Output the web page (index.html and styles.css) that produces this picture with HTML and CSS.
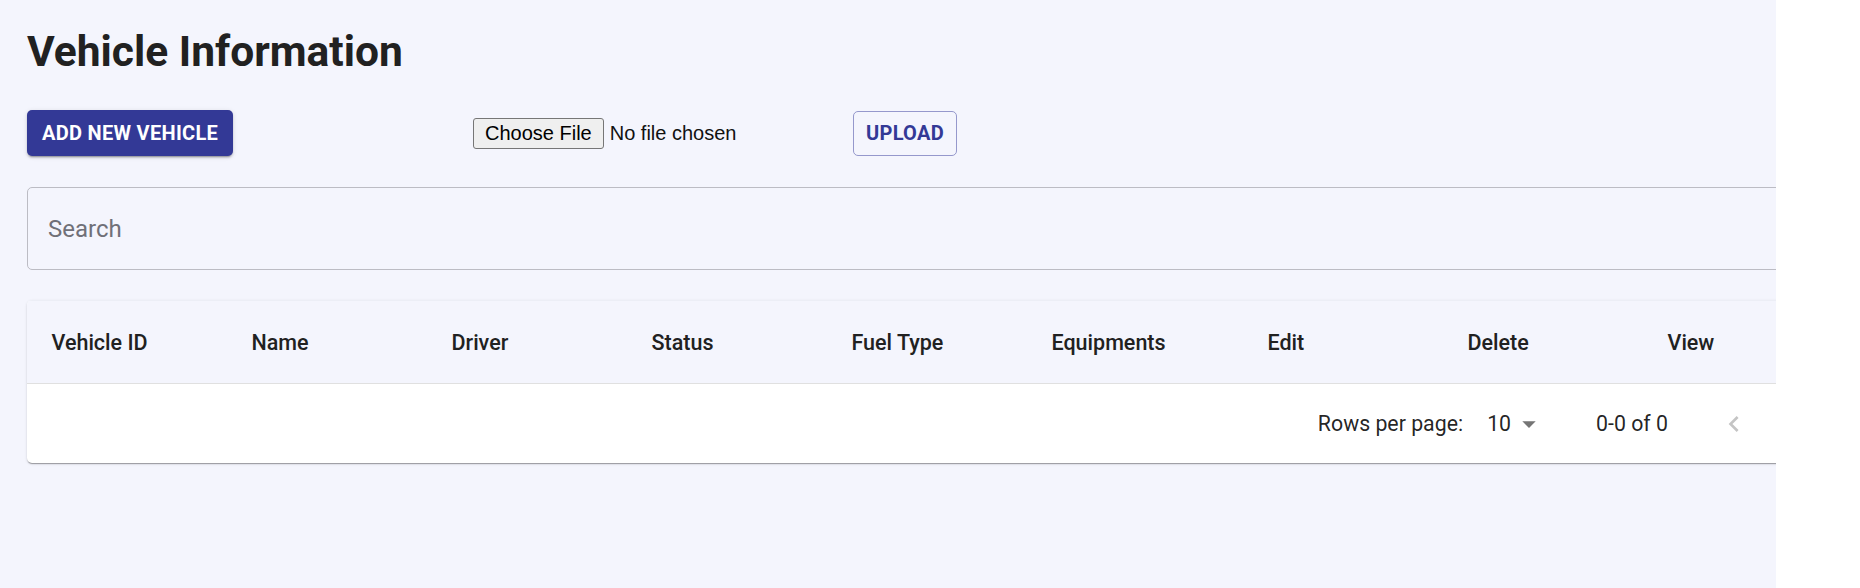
FILE: index.html
```html
<!DOCTYPE html>
<html lang="en">
<head>
<meta charset="utf-8">
<title>Vehicle Information</title>
<link rel="stylesheet" href="styles.css">
</head>
<body>
<div class="page">
  <div class="content">
    <h1 class="title">Vehicle Information</h1>
    <div class="toolbar">
      <button class="btn-primary" type="button">ADD NEW VEHICLE</button>
      <input class="file-input" type="file">
      <button class="btn-outline" type="button">UPLOAD</button>
    </div>
    <div class="search">
      <input class="search-input" type="text" placeholder="Search">
    </div>
    <div class="card">
      <div class="thead">
        <div class="th">Vehicle ID</div>
        <div class="th">Name</div>
        <div class="th">Driver</div>
        <div class="th">Status</div>
        <div class="th">Fuel Type</div>
        <div class="th">Equipments</div>
        <div class="th">Edit</div>
        <div class="th">Delete</div>
        <div class="th">View</div>
      </div>
      <div class="tfoot">
        <span class="rows-label">Rows per page:</span>
        <div class="select">
          <span class="select-value">10</span>
          <svg class="select-icon" viewBox="0 0 24 24" width="32" height="32"><path d="M7 10l5 5 5-5z"/></svg>
        </div>
        <span class="range">0-0 of 0</span>
        <div class="pager">
          <span class="pager-btn"><svg viewBox="0 0 24 24" width="32" height="32"><path d="M15.41 16.59 10.83 12l4.58-4.59L14 6l-6 6 6 6 1.41-1.41z"/></svg></span>
          <span class="pager-btn"><svg viewBox="0 0 24 24" width="32" height="32"><path d="M8.59 16.59 13.17 12 8.59 7.41 10 6l6 6-6 6-1.41-1.41z"/></svg></span>
        </div>
      </div>
    </div>
  </div>
</div>
</body>
</html>
```
FILE: styles.css
```css
html, body {
  margin: 0;
  padding: 0;
  background: #ffffff;
}

.page {
  width: 1776px;
  height: 588px;
  overflow: hidden;
  background: #f4f5fd;
  font-family: Roboto, "Noto Sans", sans-serif;
  color: rgba(0, 0, 0, 0.87);
}

.content {
  width: 1790px;
  padding: 25px 0 0 27px;
}

.title {
  margin: 0;
  font-size: 42.5px;
  line-height: 54px;
  font-weight: 700;
  color: #212121;
}

.toolbar {
  display: flex;
  align-items: center;
  height: 46px;
  margin-top: 31px;
}

.btn-primary {
  height: 46px;
  width: 206px;
  padding: 0;
  border: 0;
  border-radius: 5px;
  background: #333996;
  color: #ffffff;
  font-family: Roboto, sans-serif;
  font-size: 20px;
  font-weight: 700;
  letter-spacing: 0.3px;
  box-shadow: 0 3px 1px -2px rgba(0,0,0,0.2), 0 2px 2px 0 rgba(0,0,0,0.14), 0 1px 5px 0 rgba(0,0,0,0.12);
}

.file-input {
  margin-left: 240px;
  width: 340px;
  font-family: "Liberation Sans", Arial, sans-serif;
  font-size: 20px;
  color: #111;
}

.file-input::file-selector-button {
  font-family: "Liberation Sans", Arial, sans-serif;
  font-size: 20px;
  height: 31px;
  padding: 0 11px;
  margin-right: 6px;
  border: 1px solid #767676;
  border-radius: 3px;
  background: #efefef;
  color: #000;
}

.btn-outline {
  margin-left: 40px;
  height: 45px;
  width: 104px;
  padding: 0;
  border: 1px solid #9598cc;
  border-radius: 5px;
  background: transparent;
  color: #333996;
  font-family: Roboto, sans-serif;
  font-size: 20px;
  font-weight: 700;
  letter-spacing: 0.3px;
}

.search {
  margin-top: 31px;
  height: 83px;
  border: 1px solid #bcbcc4;
  border-radius: 5px;
  box-sizing: border-box;
  display: flex;
  align-items: center;
  padding-left: 20px;
}

.search-input {
  border: 0;
  outline: 0;
  background: transparent;
  font-family: Roboto, sans-serif;
  font-size: 24px;
  color: #333;
  width: 100%;
  padding: 0;
}

.search-input::placeholder {
  color: #707078;
}

.card {
  margin-top: 30px;
  background: #ffffff;
  border-radius: 5px;
  overflow: hidden;
  box-shadow: 0 2px 1px -1px rgba(0,0,0,0.2), 0 1px 1px 0 rgba(0,0,0,0.14), 0 1px 3px 0 rgba(0,0,0,0.12);
}

.thead {
  display: grid;
  grid-template-columns: 200px 200px 200px 200px 200px 216px 200px 200px 200px;
  height: 84px;
  box-sizing: border-box;
  background: #f4f5fd;
  border-top: 1px solid #eceef6;
  border-bottom: 1px solid #e0e0e0;
  align-items: center;
}

.th {
  padding-left: 24.5px;
  font-size: 21.5px;
  font-weight: 500;
  color: #212121;
  white-space: nowrap;
}

.tfoot {
  height: 79px;
  display: flex;
  align-items: center;
  justify-content: flex-end;
  padding-right: 4px;
  font-size: 21.3px;
  color: rgba(0, 0, 0, 0.87);
}

.rows-label {
  margin-right: 24px;
}

.select {
  display: flex;
  align-items: center;
}

.select-icon {
  fill: #757575;
  margin-left: 2px;
}

.range {
  margin-left: 51px;
}

.pager {
  display: flex;
  margin-left: 39px;
}

.pager-btn {
  width: 53px;
  height: 53px;
  display: flex;
  align-items: center;
  justify-content: center;
  fill: #c4c4c4;
}
```
